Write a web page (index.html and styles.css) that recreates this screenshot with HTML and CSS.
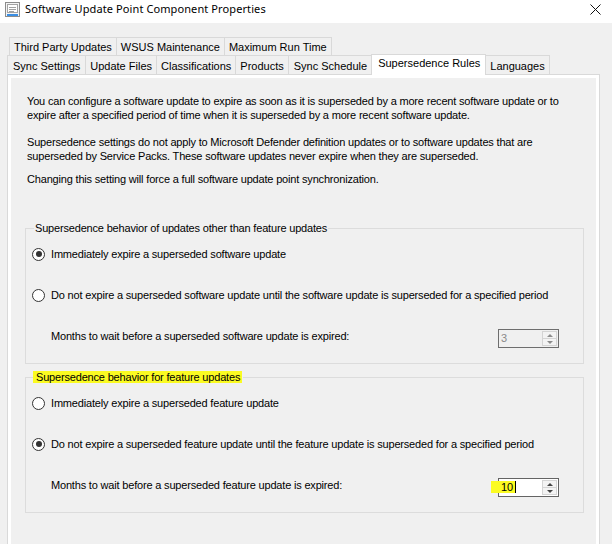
FILE: index.html
```html
<!DOCTYPE html>
<html lang="en">
<head>
    <meta charset="UTF-8">
    <meta name="viewport" content="width=device-width, initial-scale=1.0">
    <title>Software Update Point Component Properties</title>
    <link rel="stylesheet" href="styles.css">
</head>
<body>
    <div class="titlebar">
        <svg class="app-icon" width="15" height="15" viewBox="0 0 15 15">
            <rect x="0.5" y="0.5" width="14" height="14" fill="#f4f4f4" stroke="#8c8c8c"/>
            <rect x="2.5" y="2.5" width="10" height="8" fill="#fff" stroke="#a3a3a3"/>
            <path d="M4 5.5h7M4 7.5h7M4 9.5h5" stroke="#a0a0a0"/>
            <rect x="2" y="12" width="11" height="2" fill="#3b8fe4"/>
        </svg>
        <span class="title">Software Update Point Component Properties</span>
        <svg class="close" width="11" height="11" viewBox="0 0 11 11">
            <path d="M0.5 0.5l10 10M10.5 0.5l-10 10" stroke="#111" stroke-width="1"/>
        </svg>
    </div>

    <div class="tabs">
        <div class="tab-row row-top">
            <div class="tab">Third Party Updates</div>
            <div class="tab">WSUS Maintenance</div>
            <div class="tab">Maximum Run Time</div>
        </div>
        <div class="tab-row row-bottom">
            <div class="tab first">Sync Settings</div>
            <div class="tab">Update Files</div>
            <div class="tab">Classifications</div>
            <div class="tab">Products</div>
            <div class="tab wide">Sync Schedule</div>
            <div class="tab active">Supersedence Rules</div>
            <div class="tab">Languages</div>
        </div>
    </div>

    <div class="page">
        <div class="page-inner">
            <p class="note">You can configure a software update to expire as soon as it is superseded by a more recent software update or to expire after a specified period of time when it is superseded by a more recent software update.</p>
            <p class="note second">Supersedence settings do not apply to Microsoft Defender definition updates or to software updates that are superseded by Service Packs. These software updates never expire when they are superseded.</p>
            <p class="note last">Changing this setting will force a full software update point synchronization.</p>

            <fieldset class="group first">
                <legend>Supersedence behavior of updates other than feature updates</legend>
                <div class="option"><span class="radio checked"></span>Immediately expire a superseded software update</div>
                <div class="option"><span class="radio"></span>Do not expire a superseded software update until the software update is superseded for a specified period</div>
                <div class="months">
                    <span>Months to wait before a superseded software update is expired:</span>
                    <div class="spin disabled">
                        <span class="spin-value">3</span>
                        <span class="spin-btns"><span class="spin-btn up"></span><span class="spin-btn down"></span></span>
                    </div>
                </div>
            </fieldset>

            <fieldset class="group">
                <legend><span class="marker">Supersedence behavior for feature updates</span></legend>
                <div class="option"><span class="radio"></span>Immediately expire a superseded feature update</div>
                <div class="option"><span class="radio checked"></span>Do not expire a superseded feature update until the feature update is superseded for a specified period</div>
                <div class="months">
                    <span>Months to wait before a superseded feature update is expired:</span>
                    <div class="spin">
                        <span class="spin-value"><span class="marker-value">10</span></span>
                        <span class="spin-btns"><span class="spin-btn up"></span><span class="spin-btn down"></span></span>
                    </div>
                </div>
            </fieldset>
        </div>
    </div>
</body>
</html>
```

FILE: styles.css
```css
body {
    margin: 0;
    width: 612px;
    height: 544px;
    overflow: hidden;
    background: #f0f0f0;
    font-family: "Liberation Sans", Arial, sans-serif;
    font-size: 11px;
    color: #000;
}

.titlebar {
    height: 23px;
    background: #fff;
    display: flex;
    align-items: flex-start;
}
.app-icon {
    margin: 2px 0 0 5px;
}
.title {
    margin-left: 5px;
    font-family: "Noto Sans", "Open Sans", sans-serif;
    font-size: 11px;
    letter-spacing: 0.1px;
    line-height: 18px;
}
.close {
    margin: 4px 11px 0 auto;
}

.tabs {
    padding-top: 14px;
}
.tab-row {
    display: flex;
    align-items: flex-start;
}
.row-top {
    padding-left: 9px;
}
.row-bottom {
    padding-left: 7px;
}
.tab {
    height: 17px;
    line-height: 18px;
    padding: 0 4px;
    border: 1px solid #d9d9d9;
    border-bottom: none;
    margin-right: -1px;
    background: #f0f0f0;
    white-space: nowrap;
}
.row-bottom .tab {
    height: 18px;
    line-height: 20px;
}
.row-bottom .tab.first {
    padding: 0 5px;
}
.row-bottom .tab.wide {
    padding: 0 4px 0 5px;
}
.row-bottom .tab.active {
    height: 20px;
    line-height: 17px;
    margin-top: -1px;
    margin-bottom: -1px;
    padding: 0 5px 0 6px;
    background: #fff;
    position: relative;
    z-index: 1;
}

.page {
    margin-left: 7px;
    width: 593px;
    height: 480px;
    box-sizing: border-box;
    border: 1px solid #d9d9d9;
    background: #fff;
    padding: 3px;
}
.page-inner {
    height: 100%;
    box-sizing: border-box;
    background: #f0f0f0;
    padding: 16px 12px 0 14px;
    letter-spacing: -0.18px;
}

.note {
    margin: 0 0 13px 2px;
    line-height: 14px;
    padding-right: 10px;
}
.note.second {
    margin-bottom: 9px;
}
.note.last {
    margin-bottom: 0;
}

.group {
    margin: 6px 0 0 0;
    padding: 9px 24px 15px 0;
    border: 1px solid #dcdcdc;
    min-width: 0;
}
.group.first {
    margin-top: 35px;
}
.group legend {
    margin-left: 8px;
    padding: 0 1px;
    line-height: 14px;
}
.marker {
    background: #fbfb22;
    padding: 0 2px 0 3px;
    margin-left: -2px;
}

.option {
    display: flex;
    align-items: center;
    height: 20px;
    margin-bottom: 21px;
    white-space: nowrap;
}
.radio {
    width: 11px;
    height: 11px;
    margin: 0 6px 0 6px;
    border: 1px solid #333;
    border-radius: 50%;
    background: #fff;
    display: flex;
    align-items: center;
    justify-content: center;
    flex: none;
}
.radio.checked::after {
    content: "";
    width: 6px;
    height: 6px;
    border-radius: 50%;
    background: #333;
}

.months {
    display: flex;
    justify-content: space-between;
    align-items: flex-start;
    padding-left: 25px;
    line-height: 20px;
}
.spin {
    margin-top: 3px;
    width: 61px;
    height: 19px;
    box-sizing: border-box;
    border: 1px solid #646464;
    background: #fff;
    display: flex;
    justify-content: space-between;
}
.spin.disabled {
    background: #f0f0f0;
    border-color: #6e6e6e;
    color: #8a8a8a;
}
.spin-value {
    line-height: 17px;
    padding-left: 2px;
}
.marker-value {
    display: inline-block;
    line-height: 12px;
    margin-left: -10px;
    padding-left: 10px;
    padding-right: 2px;
    background: #fbfb22;
    border-right: 1px solid #000;
    color: #000;
}
.spin-btns {
    width: 15px;
    margin: 1px 1px 1px 0;
    display: flex;
    flex-direction: column;
}
.spin-btn {
    flex: 1;
    border: 1px solid #d4d4d4;
    background: #f3f3f3;
    display: flex;
    align-items: center;
    justify-content: center;
}
.spin-btn + .spin-btn {
    border-top: none;
}
.spin-btn::after {
    content: "";
    border-left: 3px solid transparent;
    border-right: 3px solid transparent;
}
.spin-btn.up::after {
    border-bottom: 3px solid #444;
}
.spin-btn.down::after {
    border-top: 3px solid #444;
}
.disabled .spin-btn.up::after {
    border-bottom-color: #8c8c8c;
}
.disabled .spin-btn.down::after {
    border-top-color: #8c8c8c;
}
```
